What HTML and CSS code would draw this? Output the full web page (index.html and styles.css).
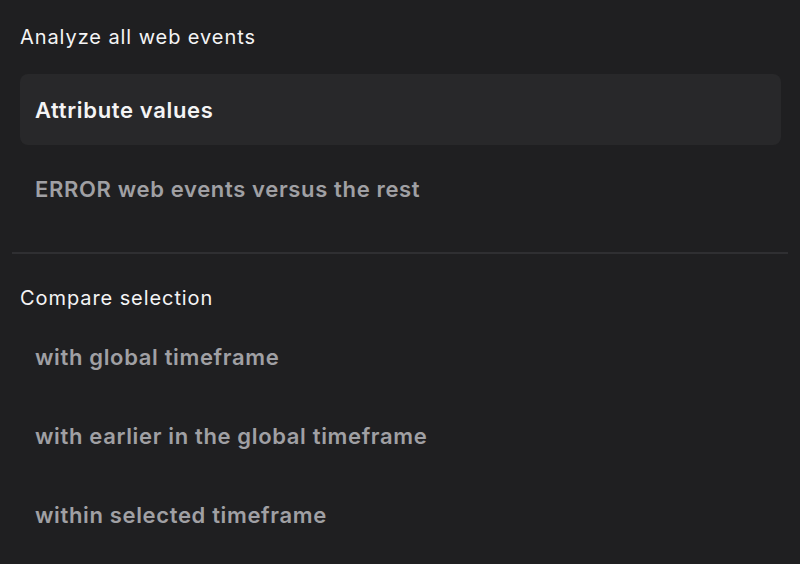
FILE: index.html
```html
<!DOCTYPE html>
<html>
<head>
  <meta charset="utf-8">
  <title>Analyze</title>
  <link rel="stylesheet" href="styles.css">
</head>
<body>
  <div class="panel">
    <section class="group">
      <h3 class="group-title">Analyze all web events</h3>
      <ul class="options">
        <li class="option selected">Attribute values</li>
        <li class="option">ERROR web events versus the rest</li>
      </ul>
    </section>
    <hr class="divider">
    <section class="group compare">
      <h3 class="group-title">Compare selection</h3>
      <ul class="options">
        <li class="option">with global timeframe</li>
        <li class="option">with earlier in the global timeframe</li>
        <li class="option">within selected timeframe</li>
      </ul>
    </section>
  </div>
</body>
</html>
```

FILE: styles.css
```css
body {
  margin: 0;
  background-color: #1f1f21;
  font-family: Inter, "Noto Sans", sans-serif;
}

.panel {
  padding: 24px 12px 0 12px;
}

.group {
  padding: 0 7px 0 8px;
}

.group-title {
  margin: 0;
  font-size: 20px;
  font-weight: 400;
  line-height: 26px;
  letter-spacing: 0.92px;
  color: #f4f4f5;
}

.options {
  list-style: none;
  margin: 24px 0 0 0;
  padding: 0;
  display: flex;
  flex-direction: column;
  gap: 8px;
}

.compare .options {
  margin-top: 10px;
}

.option {
  height: 71px;
  display: flex;
  align-items: center;
  padding: 0 15px;
  border-radius: 8px;
  font-size: 22px;
  font-weight: 600;
  letter-spacing: 0.65px;
  color: #a0a0a4;
}

.option.selected {
  background-color: #28282a;
  color: #f4f4f5;
}

.divider {
  border: none;
  border-top: 2px solid #2f2f32;
  margin: 28px 0 31px 0;
}
```
